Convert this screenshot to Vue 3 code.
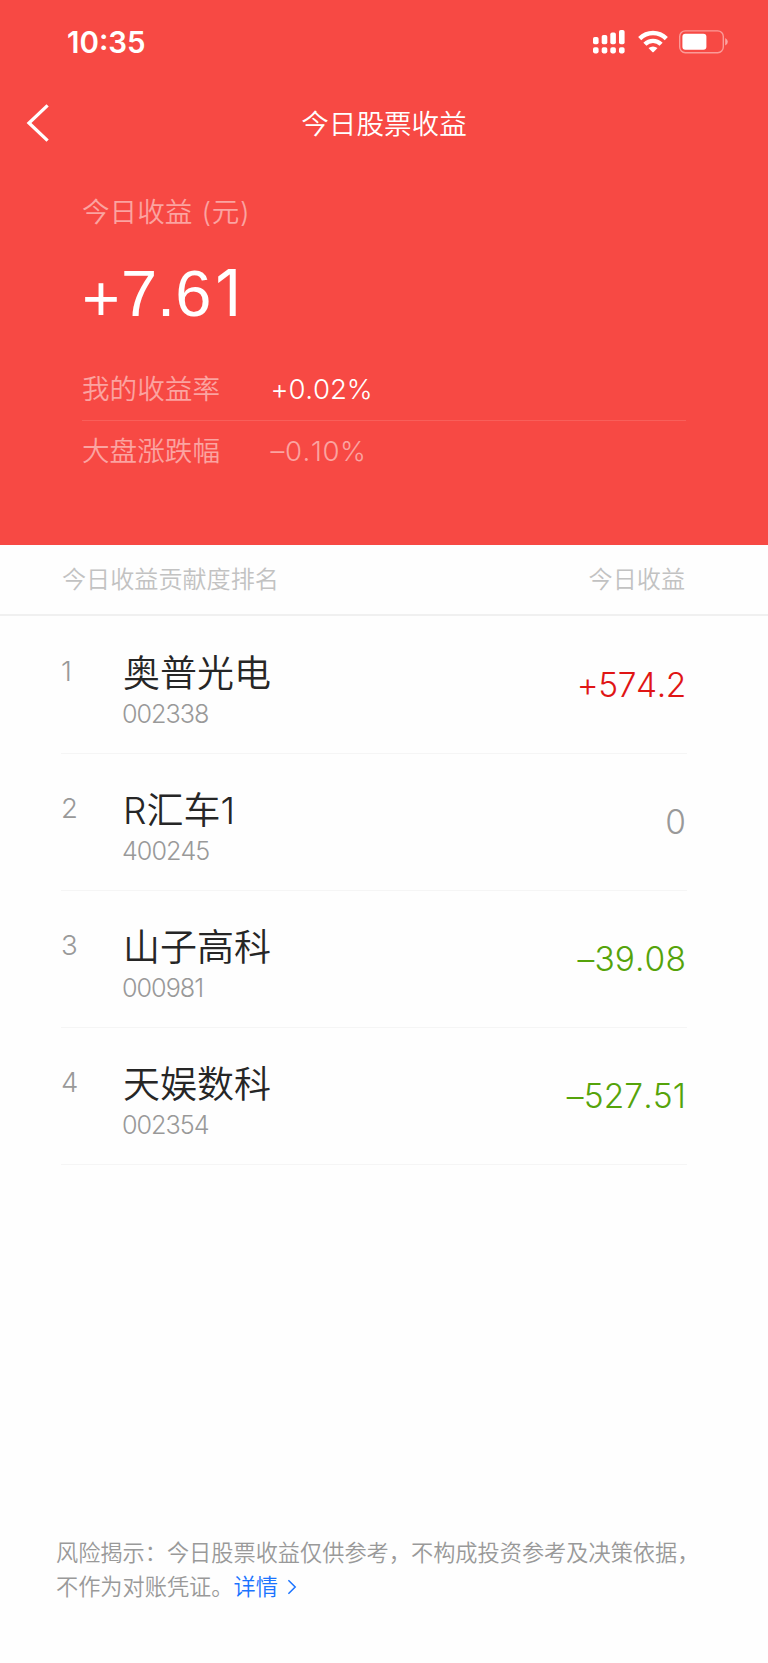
<template>
  <div class="page">
    <header class="hero">
      <div class="status-bar">
        <span class="time">10:35</span>
        <div class="status-icons">
          <svg class="signal" viewBox="0 0 33 24" fill="#fff">
            <rect x="0" y="7" width="5.6" height="7.2" rx="1.8" />
            <rect x="8.7" y="5" width="5.6" height="9.2" rx="1.8" />
            <rect x="17.3" y="2.6" width="5.6" height="11.6" rx="1.8" />
            <rect x="26" y="0" width="5.6" height="14.2" rx="1.8" />
            <rect v-for="x in [0, 8.7, 17.3, 26]" :key="x" :x="x" y="17.2" width="5.6" height="6.2" rx="1.8" />
          </svg>
          <svg class="wifi" viewBox="0 0 30 24">
            <g fill="none" stroke="#fff" stroke-width="4.4">
              <path d="M1.7 8.6C9.3 1.1 20.7 1.1 28.3 8.6" />
              <path d="M6.9 14.2C11.5 9.7 18.5 9.7 23.1 14.2" />
            </g>
            <path d="M10.5 18.1Q15 14.9 19.5 18.1L15.7 22Q15 22.6 14.3 22Z" fill="#fff" />
          </svg>
          <svg class="battery" viewBox="0 0 50 24">
            <rect x="0.7" y="0.9" width="43.6" height="21.8" rx="5.6" fill="none" stroke="#fff" stroke-opacity="0.45" stroke-width="1.4" />
            <rect x="3.4" y="3.8" width="24" height="16" rx="3" fill="#fff" />
            <path d="M46.2 8Q48.8 9.4 48.8 11.8T46.2 15.6Z" fill="#fff" fill-opacity="0.5" />
          </svg>
        </div>
      </div>

      <div class="nav-bar">
        <svg class="back" viewBox="0 0 24 38">
          <path d="M21.6 1.4L3 19L21.6 36.6" fill="none" stroke="#fff" stroke-width="3.3" />
        </svg>
        <h1>今日股票收益</h1>
      </div>

      <div class="summary">
        <div class="summary-label">今日收益<span class="unit">(元)</span></div>
        <div class="total"><span class="sign">+</span>7.6<span class="one">1</span></div>
        <div v-for="r in rates" :key="r.label" :class="['rate-row', { muted: r.muted }]">
          <span class="rate-label">{{ r.label }}</span>
          <span class="rate-value">{{ r.value }}</span>
        </div>
      </div>
    </header>

    <div class="list-head">
      <span>今日收益贡献度排名</span>
      <span>今日收益</span>
    </div>

    <div class="stock-list">
      <div v-for="(s, i) in stocks" :key="s.code" class="stock-item">
        <span class="rank">{{ i + 1 }}</span>
        <div class="stock-info">
          <span class="stock-name">{{ s.name }}</span>
          <span class="stock-code">{{ s.code }}</span>
        </div>
        <span :class="['profit', s.trend]">{{ s.profit }}</span>
      </div>
    </div>

    <footer class="risk-tip">
      <p>风险揭示：今日股票收益仅供参考，不构成投资参考及决策依据，</p>
      <p>
        不作为对账凭证。<a class="detail">详情<svg class="arrow" viewBox="0 0 10 16">
          <path d="M1.4 1.2L8.2 8L1.4 14.8" fill="none" stroke="#1a73ff" stroke-width="1.5" />
        </svg></a>
      </p>
    </footer>
  </div>
</template>

<script setup>
const rates = [
  { label: '我的收益率', value: '+0.02%' },
  { label: '大盘涨跌幅', value: '–0.10%', muted: true }
]

const stocks = [
  { name: '奥普光电', code: '002338', profit: '+574.2', trend: 'up' },
  { name: 'R汇车1', code: '400245', profit: '0', trend: 'flat' },
  { name: '山子高科', code: '000981', profit: '–39.08', trend: 'down' },
  { name: '天娱数科', code: '002354', profit: '–527.51', trend: 'down' }
]
</script>

<style>
body {
  margin: 0;
  background: #fefefe;
}
</style>

<style scoped>
.page {
  display: flex;
  flex-direction: column;
  width: 768px;
  height: 1663px;
  background: #fefefe;
  font-family: Inter, "Noto Sans CJK SC", sans-serif;
  font-weight: 350;
  font-kerning: none;
}
.hero {
  box-sizing: border-box;
  height: 544.5px;
  flex-shrink: 0;
  background: #f74944;
  color: #fff;
}
.status-bar {
  display: flex;
  align-items: center;
  justify-content: space-between;
  height: 84px;
  padding: 0 39px 0 67px;
}
.time {
  font-size: 29.5px;
  font-weight: 600;
}
.status-icons {
  display: flex;
  align-items: center;
}
.signal {
  width: 33px;
  height: 24px;
  margin-right: 12px;
}
.wifi {
  width: 30px;
  height: 24px;
  margin-right: 11px;
}
.battery {
  width: 50px;
  height: 24px;
}
.nav-bar {
  display: grid;
  grid-template-columns: 80px 1fr 80px;
  align-items: center;
  height: 78px;
}
.back {
  width: 24px;
  height: 38px;
  margin-left: 26px;
}
.nav-bar h1 {
  margin: 2px 0 0;
  font-size: 27.6px;
  font-weight: 350;
  line-height: 40px;
  text-align: center;
}
.summary {
  padding: 30px 82px 0;
}
.summary-label {
  height: 40px;
  color: rgba(255, 255, 255, 0.5);
  font-size: 27.6px;
  line-height: 41px;
}
.unit {
  margin-left: 9px;
  letter-spacing: 0.7px;
}
.total {
  height: 127px;
  font-family: "Liberation Sans", sans-serif;
  font-size: 65px;
  font-weight: 400;
  line-height: 124px;
}
.sign {
  margin-right: 1px;
  line-height: 1;
  vertical-align: -5px;
}
.one {
  margin-left: 4px;
  font-family: Inter, sans-serif;
  font-size: 64px;
  line-height: 1;
}
.rate-row {
  display: flex;
  height: 61px;
  font-size: 27.6px;
  line-height: 60px;
}
.rate-row + .rate-row {
  border-top: 1px solid rgba(255, 255, 255, 0.12);
}
.rate-label {
  width: 188.5px;
  color: rgba(255, 255, 255, 0.5);
  line-height: 61px;
}
.rate-value {
  letter-spacing: -0.1px;
}
.muted .rate-value {
  color: rgba(255, 255, 255, 0.5);
  letter-spacing: 0.6px;
}
.list-head {
  box-sizing: border-box;
  display: flex;
  justify-content: space-between;
  height: 71.5px;
  padding: 0 83px 0 62px;
  border-bottom: 2px solid #f0f0f0;
  color: #c2c2c2;
  font-size: 24.1px;
  line-height: 69px;
}
.stock-list {
  padding: 1px 81px 0 61px;
}
.stock-item {
  box-sizing: border-box;
  display: flex;
  align-items: flex-start;
  height: 137px;
  padding-top: 31px;
  border-bottom: 1px solid #f5f5f5;
}
.rank {
  width: 61px;
  color: #999;
  font-size: 27.6px;
  line-height: 47px;
}
.stock-info {
  display: flex;
  flex: 1;
  flex-direction: column;
}
.stock-name {
  padding-left: 1px;
  color: #262626;
  font-size: 37px;
  line-height: 52px;
}
.stock-code {
  margin-top: -4px;
  color: #999;
  font-size: 25.2px;
  line-height: 37px;
  letter-spacing: -1px;
}
.profit {
  padding-right: 1px;
  font-size: 33.5px;
  line-height: 74px;
  letter-spacing: 0.1px;
}
.profit.up {
  color: #e01515;
  letter-spacing: -0.4px;
}
.profit.flat {
  color: #999;
}
.profit.down {
  color: #55a30a;
}
.risk-tip {
  margin-top: auto;
  padding: 0 40px 61px 56px;
  color: #999;
  font-family: "Noto Sans CJK SC", sans-serif;
  font-size: 22.2px;
  line-height: 33.5px;
}
.risk-tip p {
  margin: 0;
  white-space: nowrap;
}
.detail {
  color: #1a73ff;
}
.arrow {
  width: 10px;
  height: 16px;
  margin-left: 9px;
  vertical-align: -0.5px;
}
</style>
